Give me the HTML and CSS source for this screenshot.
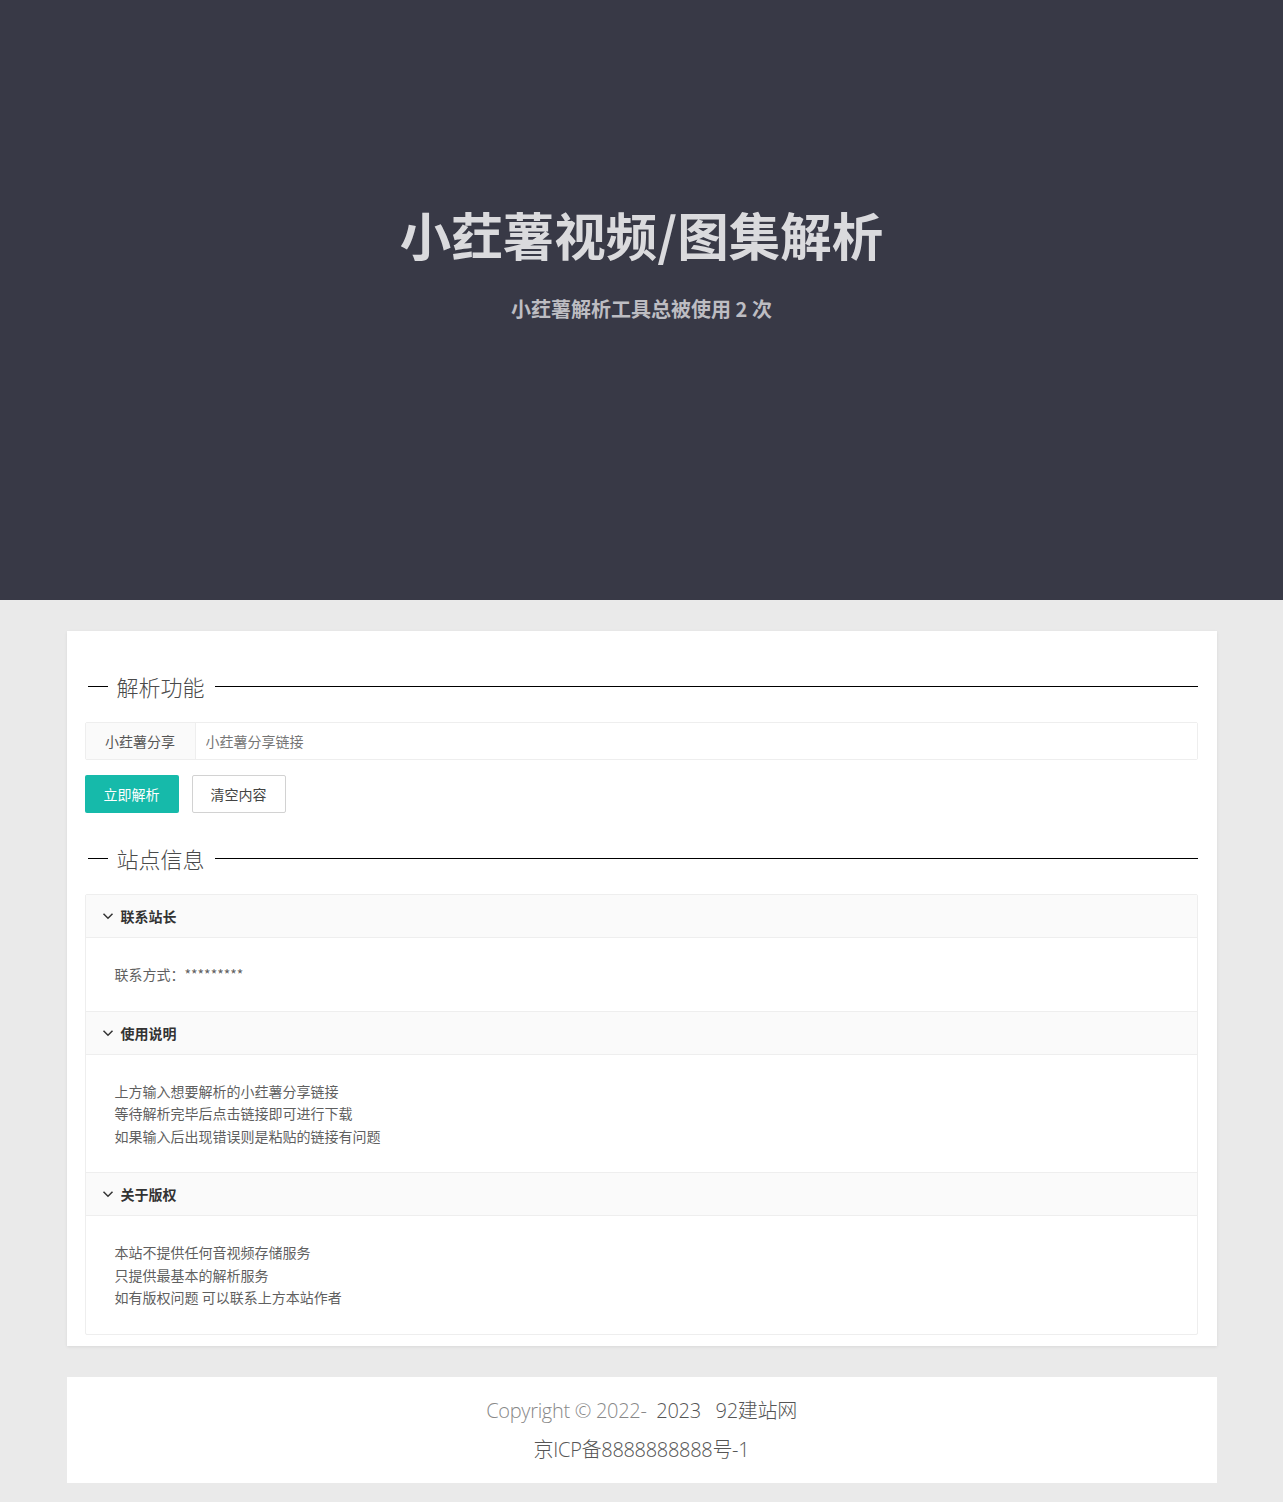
FILE: index.html
```html
<!DOCTYPE html>
<html lang="zh-CN">
<head>
<meta charset="utf-8">
<title>小荭薯视频/图集解析</title>
<link rel="stylesheet" href="styles.css">
</head>
<body>
<header class="hero">
  <h1 class="hero-title">小荭薯视频/图集解析</h1>
  <p class="hero-sub">小荭薯解析工具总被使用 2 次</p>
</header>

<main class="card">
  <div class="field-title"><span class="ft-line-short"></span><span class="ft-text">解析功能</span><span class="ft-line"></span></div>

  <div class="input-group">
    <div class="input-label">小荭薯分享</div>
    <input class="input" type="text" placeholder="小荭薯分享链接">
  </div>

  <div class="btn-row">
    <button class="btn btn-primary">立即解析</button>
    <button class="btn btn-ghost">清空内容</button>
  </div>

  <div class="field-title field-title-2"><span class="ft-line-short"></span><span class="ft-text">站点信息</span><span class="ft-line"></span></div>

  <div class="collapse">
    <div class="colla-item">
      <div class="colla-title"><svg class="chev" viewBox="0 0 12 12" width="12" height="12"><polyline points="1.5,3.8 6,8.2 10.5,3.8" fill="none" stroke="#333" stroke-width="1.5"/></svg>联系站长</div>
      <div class="colla-content">
        <p>联系方式：*********</p>
      </div>
    </div>
    <div class="colla-item">
      <div class="colla-title"><svg class="chev" viewBox="0 0 12 12" width="12" height="12"><polyline points="1.5,3.8 6,8.2 10.5,3.8" fill="none" stroke="#333" stroke-width="1.5"/></svg>使用说明</div>
      <div class="colla-content">
        <p>上方输入想要解析的小荭薯分享链接</p>
        <p>等待解析完毕后点击链接即可进行下载</p>
        <p>如果输入后出现错误则是粘贴的链接有问题</p>
      </div>
    </div>
    <div class="colla-item">
      <div class="colla-title"><svg class="chev" viewBox="0 0 12 12" width="12" height="12"><polyline points="1.5,3.8 6,8.2 10.5,3.8" fill="none" stroke="#333" stroke-width="1.5"/></svg>关于版权</div>
      <div class="colla-content">
        <p>本站不提供任何音视频存储服务</p>
        <p>只提供最基本的解析服务</p>
        <p>如有版权问题 可以联系上方本站作者</p>
      </div>
    </div>
  </div>
</main>

<footer class="footer">
  <p><span class="muted">Copyright © 2022-</span>&nbsp; 2023 &nbsp; 92建站网</p>
  <p>京ICP备8888888888号-1</p>
</footer>
</body>
</html>
```

FILE: styles.css
```css
* { box-sizing: border-box; }
html, body { margin: 0; padding: 0; }
body {
  background: #eaeaea;
  font-family: "Noto Sans CJK SC", "Noto Sans", sans-serif;
  color: #333;
  font-size: 14px;
  padding-bottom: 19px;
}
p { margin: 0; }

.hero {
  background: #383946;
  height: 600px;
  text-align: center;
  padding-top: 197px;
}
.hero-title {
  margin: 0;
  font-size: 51.5px;
  line-height: 74px;
  font-weight: 700;
  color: #dadadd;
}
.hero-sub {
  margin-top: 24px;
  font-size: 20px;
  line-height: 28px;
  font-weight: 700;
  color: #bdbdc2;
}

.card {
  display: block;
  width: 1150px;
  margin: 31px auto 0;
  background: #fff;
  box-shadow: 0 1px 3px rgba(0,0,0,0.08);
  padding: 40px 19px 11px 18px;
}

.field-title {
  display: flex;
  align-items: center;
  height: 30px;
}
.field-title-2 { margin-top: 30px; }
.ft-line-short {
  width: 20px;
  height: 1px;
  background: #000;
  margin-left: 3px;
}
.ft-line {
  flex: 1;
  height: 1px;
  background: #000;
}
.ft-text {
  font-size: 22px;
  font-weight: 300;
  color: #4a4a4a;
  padding: 0 10px 0 9px;
  line-height: 30px;
}

.input-group {
  display: flex;
  margin-top: 21px;
  height: 38px;
  border: 1px solid #eee;
  border-radius: 2px;
}
.input-label {
  width: 110px;
  background: #fafafa;
  border-right: 1px solid #eee;
  text-align: center;
  line-height: 36px;
  color: #555;
  font-size: 14px;
}
.input {
  flex: 1;
  border: 0;
  outline: 0;
  padding: 0 10px;
  font-family: "Noto Sans CJK SC", sans-serif;
  font-size: 14px;
  color: #333;
  background: #fff;
}
.input::placeholder { color: #757575; }

.btn-row {
  display: flex;
  gap: 13px;
  margin-top: 15px;
}
.btn {
  width: 94px;
  height: 38px;
  font-family: "Noto Sans CJK SC", sans-serif;
  font-size: 14px;
  border-radius: 2px;
  padding: 0;
  cursor: pointer;
}
.btn-primary {
  background: #16baaa;
  color: #fff;
  border: 0;
}
.btn-ghost {
  background: #fff;
  color: #444;
  border: 1px solid #d2d2d2;
}

.collapse {
  margin-top: 21px;
  border: 1px solid #eee;
  border-radius: 2px;
}
.colla-item + .colla-item { border-top: 1px solid #eee; }
.colla-title {
  display: flex;
  align-items: center;
  height: 43px;
  background: #fafafa;
  padding-left: 16px;
  font-weight: 700;
  font-size: 14px;
  color: #333;
  border-bottom: 1px solid #eee;
}
.chev { margin-right: 7px; }
.colla-content {
  padding: 25px 29px;
  color: #5f5f5f;
  font-size: 14px;
  line-height: 22.5px;
}

.footer {
  width: 1150px;
  margin: 31px auto 0;
  background: #fff;
  padding: 14px 0 14px;
  text-align: center;
  font-family: "Open Sans", "Noto Sans CJK SC", sans-serif;
  font-weight: 300;
  font-size: 20px;
  line-height: 39px;
  color: #555;
  letter-spacing: -0.3px;
}
.footer .muted { color: #888; }
```
